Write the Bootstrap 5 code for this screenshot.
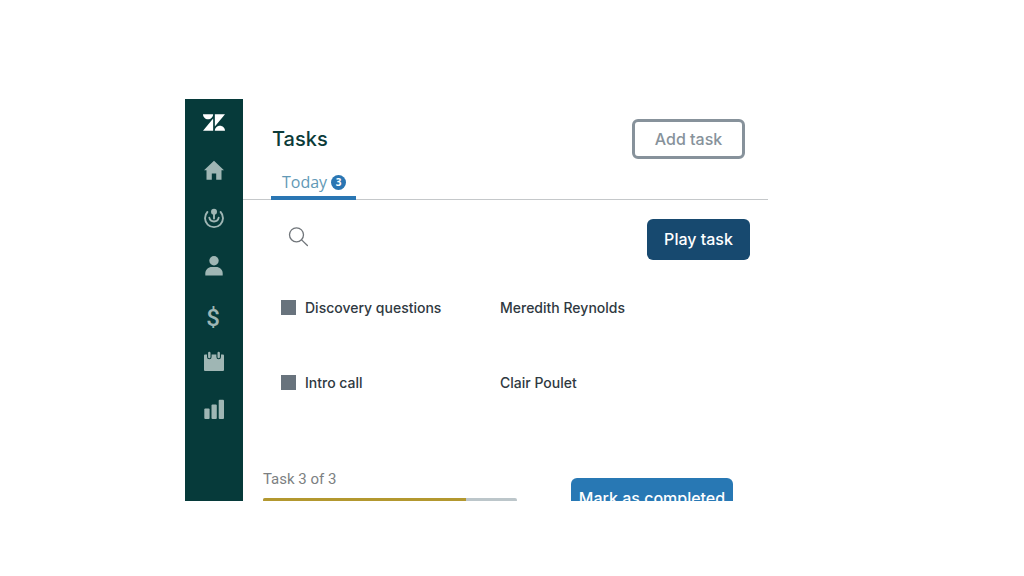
<!DOCTYPE html>
<html lang="en">
<head>
<meta charset="utf-8">
<meta name="viewport" content="width=device-width, initial-scale=1">
<title>Tasks</title>
<link href="https://cdn.jsdelivr.net/npm/bootstrap@5.3.0/dist/css/bootstrap.min.css" rel="stylesheet">
<style>
  body { font-family: "Inter", "Liberation Sans", sans-serif; color: #2f3941; background: #fff; }
  .stage { height: 100vh; padding: 99px 25% 75px 185px; }
  .rail { flex: 0 0 58px; background: #063a3a; }
  .rail a { height: 48px; color: #9fb6b4; text-decoration: none; }
  .rail a.brand { height: 47px; color: #fff; }
  .rail .glyph { font: 500 24px/24px "Roboto", sans-serif; padding: 8px 2px 0 0; }
  .topbar { padding: 20px 23px 0 29px; }
  .page-title { font-size: 20px; line-height: 40px; font-weight: 500; color: #0b3b38; }
  .btn { --bs-btn-font-weight: 500; --bs-btn-padding-y: 0; --bs-btn-padding-x: 0; --bs-btn-border-radius: 6px; height: 40px; font-size: 16px; line-height: 24px; }
  .btn-add { width: 113px; border: 3px solid #87929b; color: #87929b; }
  .btn-play { width: 103px; height: 41px; padding-bottom: 2px; background: #17496f; color: #fff; }
  .btn-done { width: 162px; margin-top: 10px; background: #2878b4; color: #fff; }
  .tabs { padding-left: 28px; border-bottom: 1px solid #c5c8ca; }
  .tab { height: 41px; padding: 11px 10px 0 11px; margin-bottom: -1px; border-bottom: 4px solid #2a76b3; font: 400 16px/24px "Open Sans", sans-serif; color: #6299b6; text-decoration: none; }
  .count { width: 15px; height: 15px; margin: 5px 0 0 4px; background: #2a76b3; color: #fff; font-size: 10px; line-height: 15px; font-weight: 700; }
  .tools { padding: 19px 18px 0 45px; }
  .search input { border: 0; padding: 0; height: 24px; outline-offset: 4px; }
  .tasks { margin: 10px 0 0 38px; width: calc(100% - 56px); }
  .tasks td { height: 75px; padding: 0; font-size: 14px; line-height: 20px; font-weight: 500; vertical-align: middle; }
  .tasks .pick { width: 24px; }
  .tasks .what { width: 195px; }
  .tasks input { appearance: none; display: block; width: 15px; height: 15px; margin: 0; background: #68737d; }
  .tasks input:checked { background: #2a76b3; }
  .foot { padding: 48px 35px 0 20px; gap: 54px; }
  .foot label { display: block; font: 400 15px/22px "Roboto", sans-serif; color: #7c7f82; }
  .progress { height: 4px; margin-top: 8px; border-radius: 2px; background: #bcc6ca; }
  .progress-bar { background: #b3982f; }
</style>
</head>
<body>
<main class="stage">
  <div class="d-flex h-100 overflow-hidden">
    <nav class="rail d-flex flex-column" aria-label="Main">
      <a class="brand d-flex align-items-center justify-content-center" href="#" aria-label="Zendesk">
        <svg width="22" height="17" viewBox="0 3 26 19.7" fill="currentColor"><path d="M12 8.2v14.5H0zM12 3c0 3.3-2.7 6-6 6S0 6.3 0 3zM14 22.7c0-3.3 2.7-6 6-6s6 2.7 6 6zM14 17.5V3h12z"/></svg>
      </a>
      <a class="d-flex align-items-center justify-content-center" href="#" aria-label="Home">
        <svg width="24" height="24" viewBox="0 0 24 24" fill="currentColor"><path d="M12 2.8 2 12.3h2.5v9.5h5.3v-6.3h4.4v6.3h5.3v-9.5H22z"/></svg>
      </a>
      <a class="d-flex align-items-center justify-content-center" href="#" aria-label="Leads">
        <svg width="24" height="24" viewBox="0 0 24 24" fill="none" stroke="currentColor" stroke-width="1.9" stroke-linecap="round"><path d="M5.4 6a9 9 0 1 0 13.2 0M7.3 11.600a4.800 4.800 0 0 0 9.400 0M12 7v5.500"/><circle cx="12" cy="5.700" r="3" fill="currentColor" stroke="none"/></svg>
      </a>
      <a class="d-flex align-items-center justify-content-center" href="#" aria-label="Contacts">
        <svg width="24" height="24" viewBox="0 0 24 24" fill="currentColor"><circle cx="12" cy="6.700" r="4.700"/><path d="M3.300 21.600v-2.100c0-4 3.200-6.500 6.400-6.500h4.600c3.200 0 6.400 2.500 6.400 6.500v2.100z"/></svg>
      </a>
      <a class="d-flex align-items-center justify-content-center" href="#" aria-label="Deals"><span class="glyph">$</span></a>
      <a class="d-flex align-items-center justify-content-center" href="#" aria-label="Calendar">
        <svg width="24" height="24" viewBox="0 0 24 24"><path fill="currentColor" d="M3 4.500h18a1 1 0 0 1 1 1V20a1 1 0 0 1-1 1H3a1 1 0 0 1-1-1V5.500a1 1 0 0 1 1-1z"/><path stroke="#063a3a" stroke-width="4.600" stroke-linecap="round" d="M7.300 3v4M16.700 3v4"/><path stroke="currentColor" stroke-width="2.400" stroke-linecap="round" d="M7.300 3v4M16.700 3v4"/></svg>
      </a>
      <a class="d-flex align-items-center justify-content-center" href="#" aria-label="Reports">
        <svg width="24" height="24" viewBox="0 0 24 24" fill="currentColor"><rect x="2.300" y="10.500" width="5.300" height="10.500" rx="1"/><rect x="9.500" y="6.500" width="5.300" height="14.500" rx="1"/><rect x="16.700" y="1.700" width="5.300" height="19.300" rx="1"/></svg>
      </a>
    </nav>
    <section class="flex-grow-1">
      <header class="topbar d-flex justify-content-between">
        <h1 class="page-title m-0">Tasks</h1>
        <button type="button" class="btn btn-add">Add task</button>
      </header>
      <div class="tabs d-flex">
        <a class="tab d-flex align-items-start" href="#" aria-current="page">Today<span class="count rounded-circle text-center">3</span></a>
      </div>
      <div class="tools d-flex justify-content-between align-items-start">
        <label class="search d-flex pt-2">
          <svg width="22" height="20" viewBox="0 0 22 20" fill="none" stroke="#70757a" stroke-width="1.300" stroke-linecap="round"><circle cx="8.500" cy="7.800" r="7"/><path d="m13.600 12.900 5.800 5.600"/></svg>
          <input type="search" aria-label="Search tasks">
        </label>
        <button type="button" class="btn btn-play">Play task</button>
      </div>
      <table class="tasks">
        <tbody>
          <tr>
            <td class="pick"><input type="checkbox" id="t1"></td>
            <td class="what"><label for="t1">Discovery questions</label></td>
            <td>Meredith Reynolds</td>
          </tr>
          <tr>
            <td class="pick"><input type="checkbox" id="t2"></td>
            <td class="what"><label for="t2">Intro call</label></td>
            <td>Clair Poulet</td>
          </tr>
        </tbody>
      </table>
      <footer class="foot d-flex">
        <div class="flex-grow-1">
          <label id="step">Task 3 of 3</label>
          <div class="progress" role="progressbar" aria-labelledby="step" aria-valuenow="80" aria-valuemin="0" aria-valuemax="100"><div class="progress-bar" style="width: 80%"></div></div>
        </div>
        <button type="button" class="btn btn-done">Mark as completed</button>
      </footer>
    </section>
  </div>
</main>
<script src="https://cdn.jsdelivr.net/npm/bootstrap@5.3.0/dist/js/bootstrap.bundle.min.js"></script>
</body>
</html>
